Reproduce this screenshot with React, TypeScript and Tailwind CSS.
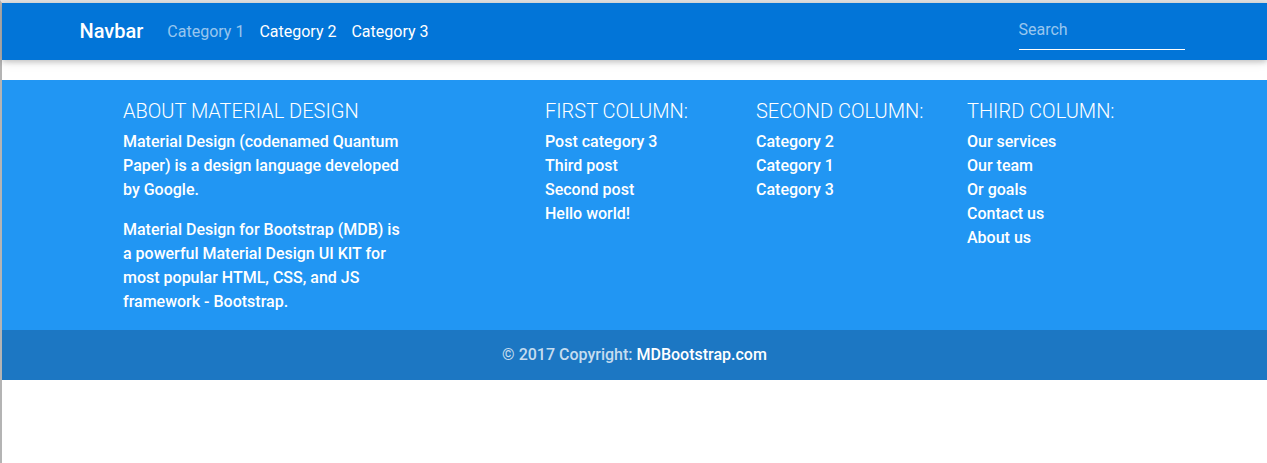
const links = ["Category 1", "Category 2", "Category 3"];

const columns = [
  {
    title: "First column:",
    items: ["Post category 3", "Third post", "Second post", "Hello world!"],
  },
  {
    title: "Second column:",
    items: ["Category 2", "Category 1", "Category 3"],
  },
  {
    title: "Third column:",
    items: ["Our services", "Our team", "Or goals", "Contact us", "About us"],
  },
];

export default function App() {
  return (
    <div className="min-h-[463px] bg-white border-l-2 border-t-[3px] border-l-[#b4b4b4] border-t-[#e4e4e4] font-['Roboto',sans-serif]">
      {/* Navbar */}
      <nav className="h-[57px] bg-[#0275d8] shadow-[0_2px_5px_rgba(0,0,0,0.16),0_2px_10px_rgba(0,0,0,0.12)]">
        <div className="w-[1140px] mx-auto px-[15px] h-full flex items-center">
          <a className="text-xl font-medium text-white mr-4 -mt-[1px]">Navbar</a>
          <ul className="flex">
            {links.map((l, i) => (
              <li key={l}>
                <a
                  className={`pl-2 pr-[7px] text-base ${
                    i === 0 ? "text-white/60" : "text-white"
                  }`}
                >
                  {l}
                </a>
              </li>
            ))}
          </ul>
          <div className="ml-auto mr-[5px] w-[166px] mt-[4px]">
            <input
              placeholder="Search"
              className="w-full bg-transparent text-base leading-6 text-white placeholder:text-white/60 border-b border-white pb-[7px] outline-none"
            />
          </div>
        </div>
      </nav>

      {/* Footer */}
      <footer className="mt-5 bg-[#2196f3] text-white">
        <div className="flex pl-[121px] pt-[19px] h-[250px]">
          <div className="w-[284px]">
            <h5 className="text-xl font-light uppercase leading-6 mb-[7px]">About material design</h5>
            <p className="text-base font-medium leading-6 mb-4">
              Material Design (codenamed Quantum Paper) is a design language
              developed by Google.
            </p>
            <p className="text-base font-medium leading-6">
              Material Design for Bootstrap (MDB) is a powerful Material Design
              UI KIT for most popular HTML, CSS, and JS framework - Bootstrap.
            </p>
          </div>
          <div className="flex ml-[138px]">
            {columns.map((c) => (
              <div key={c.title} className="w-[211px]">
                <h5 className="text-xl font-light uppercase leading-6 mb-[7px]">{c.title}</h5>
                <ul>
                  {c.items.map((it) => (
                    <li key={it} className="text-base font-medium leading-6">
                      <a>{it}</a>
                    </li>
                  ))}
                </ul>
              </div>
            ))}
          </div>
        </div>
        <div className="h-[50px] bg-[#1c77c3] flex items-center justify-center text-base font-medium">
          <span className="text-white/75">© 2017 Copyright:&nbsp;</span>
          <a className="text-white">MDBootstrap.com</a>
        </div>
      </footer>
    </div>
  );
}
